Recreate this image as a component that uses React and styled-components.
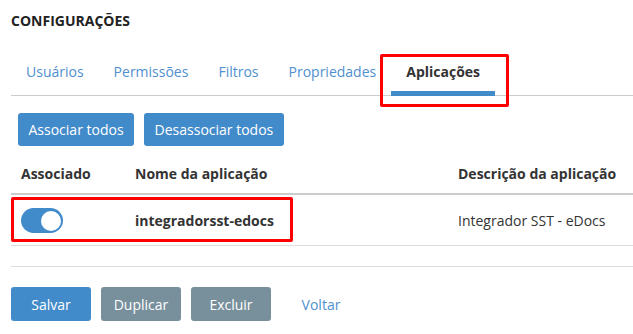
import React from "react";
import styled, { createGlobalStyle } from "styled-components";

const GlobalStyle = createGlobalStyle`
  body {
    margin: 0;
    background: #fff;
    font-family: "Open Sans", "Liberation Sans", sans-serif;
    color: #333;
  }
`;

const Page = styled.div`
  padding: 11px 0 0 11px;
`;

const Title = styled.h1`
  margin: 0;
  font-size: 14px;
  line-height: 20px;
  font-weight: 700;
  color: #222;
`;

const Tabs = styled.ul`
  display: flex;
  margin: 21px 0 0;
  padding: 0;
  list-style: none;
  border-bottom: 1px solid #ccc;
`;

const Tab = styled.li`
  position: relative;
  padding: 10px 15px 9px;
  font-size: 14px;
  line-height: 20px;
  color: ${(p) => (p.$active ? "#333" : "#4f90d0")};
  font-weight: ${(p) => (p.$active ? 700 : 400)};
  border-bottom: 5px solid ${(p) => (p.$active ? "#428bca" : "transparent")};
  margin-bottom: -1px;
  cursor: pointer;
`;

const Highlight = styled.span`
  position: absolute;
  box-sizing: border-box;
  border: 3px solid #f00;
  border-radius: 2px;
  pointer-events: none;
  left: ${(p) => p.$left}px;
  right: ${(p) => (p.$right !== undefined ? `${p.$right}px` : "auto")};
  top: ${(p) => p.$top}px;
  bottom: ${(p) => p.$bottom}px;
  width: ${(p) => (p.$width ? `${p.$width}px` : "auto")};
`;

const Toolbar = styled.div`
  display: flex;
  gap: 10px;
  margin: 17px 0 0 7px;
`;

const Button = styled.button`
  height: ${(p) => (p.$fixed ? "34px" : "33px")};
  width: ${(p) => (p.$fixed ? "80px" : "auto")};
  padding: ${(p) => (p.$fixed ? "0" : "0 10.5px")};
  border: none;
  border-radius: 3px;
  font-family: inherit;
  font-size: 14px;
  color: ${(p) => (p.$variant === "link" ? "#4f90d0" : "#fff")};
  background: ${(p) =>
    p.$variant === "gray" ? "#78909c" : p.$variant === "link" ? "transparent" : "#428bca"};
  cursor: pointer;
`;

const Table = styled.div`
  margin-top: 7px;
`;

const Row = styled.div`
  position: relative;
  display: grid;
  grid-template-columns: 124px 323px 1fr;
  align-items: center;
  height: ${(p) => (p.$head ? "40px" : "50px")};
  border-bottom: ${(p) => (p.$head ? "2px solid #ccc" : "1px solid #ddd")};
  font-size: 14px;
`;

const Cell = styled.div`
  padding-left: 10px;
  font-weight: ${(p) => (p.$bold ? 700 : 400)};
  white-space: nowrap;
`;

const NameCell = styled(Cell)`
  padding-left: 0;
`;

const Switch = styled.span`
  position: relative;
  display: block;
  width: 42px;
  height: 25px;
  border-radius: 13px;
  background: #428bca;

  &::after {
    content: "";
    position: absolute;
    top: 3px;
    right: 2px;
    width: 20px;
    height: 20px;
    border-radius: 50%;
    background: #fff;
  }
`;

const Divider = styled.hr`
  margin: 20px 0 0;
  border: none;
  border-top: 1px solid #ddd;
`;

const Footer = styled.div`
  display: flex;
  gap: 10px;
  margin-top: 20px;
`;

const tabs = ["Usuários", "Permissões", "Filtros", "Propriedades", "Aplicações"];

export default function App() {
  return (
    <>
      <GlobalStyle />
      <Page>
        <Title>CONFIGURAÇÕES</Title>
        <Tabs>
          {tabs.map((t) => (
            <Tab key={t} $active={t === "Aplicações"}>
              {t}
              {t === "Aplicações" && (
                <Highlight $left={-11} $right={-14} $top={2} $bottom={-16} />
              )}
            </Tab>
          ))}
        </Tabs>
        <Toolbar>
          <Button>Associar todos</Button>
          <Button>Desassociar todos</Button>
        </Toolbar>
        <Table>
          <Row $head>
            <Cell $bold>Associado</Cell>
            <NameCell $bold>Nome da aplicação</NameCell>
            <NameCell $bold>Descrição da aplicação</NameCell>
          </Row>
          <Row>
            <Highlight $left={0} $width={282} $top={2} $bottom={3} />
            <Cell>
              <Switch />
            </Cell>
            <NameCell $bold>integradorsst-edocs</NameCell>
            <NameCell>Integrador SST - eDocs</NameCell>
          </Row>
        </Table>
        <Divider />
        <Footer>
          <Button $fixed>Salvar</Button>
          <Button $fixed $variant="gray">Duplicar</Button>
          <Button $fixed $variant="gray">Excluir</Button>
          <Button $fixed $variant="link">Voltar</Button>
        </Footer>
      </Page>
    </>
  );
}
